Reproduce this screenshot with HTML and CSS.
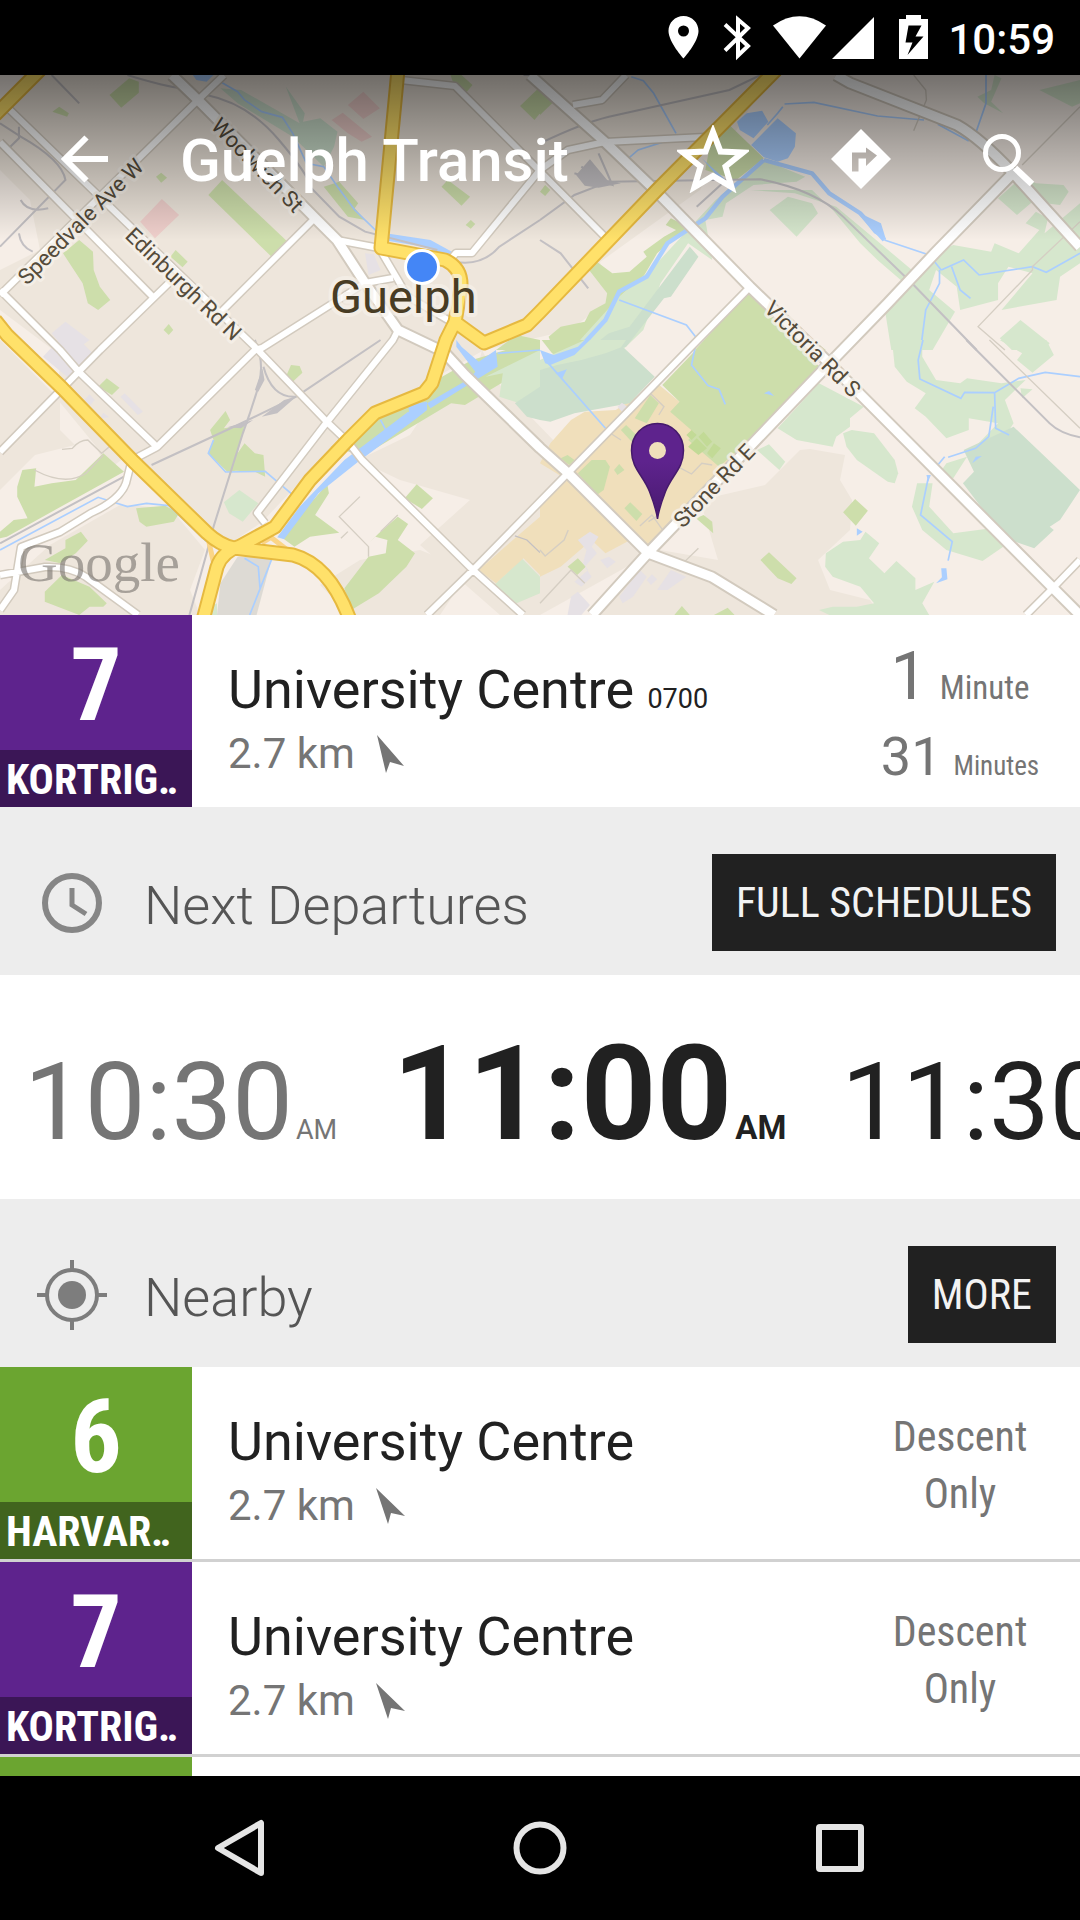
FILE: index.html
```html
<!DOCTYPE html>
<html lang="en">
<head>
<meta charset="utf-8">
<meta name="viewport" content="width=device-width, initial-scale=1">
<title>Guelph Transit</title>
<link rel="stylesheet" href="styles.css">
</head>
<body>
<div class="status">
  <svg class="status-icons" viewBox="664 0 268 75" aria-hidden="true">
    <path fill-rule="evenodd" d="M683.500 16c-8.500 0-15 6.700-15 15 0 11 15 27.500 15 27.500s15-16.500 15-27.500c0-8.300-6.500-15-15-15zm0 9.500a5.500 5.500 0 1 1 0 11 5.500 5.500 0 0 1 0-11z"/>
    <path class="bt" d="M725 24.500l23 21.500-10 9.500V19.500l10 8.500-23 22.500"/>
    <path d="M773 25.500Q799.500 7 826 25.500L799.500 58.500z"/>
    <path d="M874 17v42h-42z"/>
    <path fill-rule="evenodd" d="M906 15h15v4h7v40h-29V19h7zm2.500 10.500l-3 17h7l-5 12.500 16-18.500h-8l6-11z"/>
  </svg>
  <time class="status-time">10:59</time>
</div>

<main class="screen">
  <header class="hero">
    <svg class="map" viewBox="0 75 1080 540" role="img" aria-label="Map of Guelph">
      <defs>
        <linearGradient id="shade" x1="0" y1="0" x2="0" y2="1">
          <stop offset="0" stop-color="#000" stop-opacity=".53"/>
          <stop offset="1" stop-color="#000" stop-opacity="0"/>
        </linearGradient>
        <linearGradient id="pin" x1="0" y1="0" x2="0" y2="1">
          <stop offset=".4" stop-color="#5e238d"/>
          <stop offset="1" stop-color="#481a6f"/>
        </linearGradient>
        <path id="streets" d="M0 295L198 100 224 75M7 107L103 200 255 347 327 422 348 442 362 460 473 570 523 615M0 142L153 297M172 280L100 350 0 452M0 290L60 350 79 372 157 447 138 457 131 463 126 483Q120 500 91 513L60 532 21 547 14 590 0 610M0 575L45 567Q70 566 86 577L138 615M315 218L220 313M157 447L255 350 262 348 365 283M398 330L393 340 327 422 257 513 265 523M401 80L455 86 517 148 605 237M540 170L472 253H456L444 267M540 170L568 150 605 142 705 137M573 105L602 100 626 75M337 240L379 248 398 280M365 283L393 278M398 280L407 296 448 320M750 287L688 350 568 473 473 570 427 615M1080 560L1053 588 1026 615"/>
        <path id="avenues" d="M172 75L198 100 315 218 337 240 365 283 398 330 444 352 465 375 540 448 568 473 648 553 712 577 774 615M530 75L605 142 657 192 750 287 826 360 1053 588 1080 615M1013 173L936 252 888 303 826 367 648 553 592 615M836 75L850 83 957 125Q980 138 1013 173L1080 247"/>
        <path id="highways" d="M-5 320L7 335 62 388 134 462 207 533Q220 545 234 548L293 555Q330 565 350 620M203 620L217 567Q222 552 240 546L275 527 310 480 348 440 375 413 424 393 432 383 446 340 455 322 461 287Q462 268 445 260L381 248 398 70M455 322L484 343 527 325 540 312 657 190 776 70M-5 115L40 70"/>
      </defs>
      <rect y="75" width="1080" height="540" fill="#f6eee7"/>

      <!-- built-up areas -->
      <g class="urban">
        <path d="M30 75H770L700 190 600 262 610 300 570 330 484 350 440 375 340 440 262 522 228 545 150 470 128 455 108 470 95 445 58 400 60 355 0 310V270L40 250 30 200 0 170V110z"/>
        <path d="M0 340L60 400 60 430 75 445 35 455 0 490zM0 590L50 545 120 505 170 508 205 550 190 590 200 615H0z"/>
        <path d="M358 460L410 435 430 405 475 380 482 350 500 385 640 530 648 555 540 615 500 615 420 545 470 500 400 480z"/>
        <path d="M700 500L765 485 800 450 810 449 845 455 840 480 852 500 850 530 818 560 830 590 870 600 880 615H600L660 550 718 560z"/>
        <path d="M320 585L360 560 420 550 470 570 440 615H350z"/>
      </g>

      <!-- parks, campus and water, north-west tile -->
      <g transform="translate(0 70) scale(.3444 .3333)">
        <g class="park"><path d="M318 75L375 25 403 35V68L352 113z"/><path d="M152 125L172 110 200 130 195 140z"/><path d="M453 320L468 308 485 323 468 338z"/><path d="M605 375L645 330 835 515 790 562z"/><path d="M183 550L230 510 270 545 272 600 290 650 320 690 285 720 255 700 240 640z"/><path d="M495 560L510 540 545 575 530 592z"/><path d="M475 780L490 762 503 780 490 795z"/><path d="M1282 350L1300 330 1365 380 1340 407z"/><path d="M1352 465L1367 450 1380 462 1367 476z"/><path d="M1510 108L1568 50V130L1552 150z"/><path d="M1308 15L1340 15 1372 45 1355 66 1320 50z"/><path d="M940 350L985 335 1040 400 1030 415 1060 450 1010 440z"/><path d="M1440 840L1500 795 1568 810V840z"/></g>
        <g class="wood"><path d="M640 55L700 60 870 160 830 50 885 130 880 155 930 145 980 185 970 230 940 290 890 240 850 200 690 100z"/></g>
        <g class="pink"><path d="M1010 105L1055 65 1103 115 1055 147zM963 150L995 128 1080 200 1050 215 1010 190zM407 455L470 387 520 435 450 505z"/></g>
        <g class="civic"><path d="M1060 550L1085 553 1105 600 1070 615zM150 790L190 755 260 810 220 840H190z"/></g>
        <g class="water"><path d="M560 15H620L600 35 570 30z"/><path d="M1120 490L1250 510 1320 550 1305 565 1240 532 1125 512z"/></g>
        <path class="river" d="M645 38L690 65 710 90 760 125 820 142 850 190 890 280 940 290 980 350 1030 420 1100 490"/>
        <path class="rail" d="M370 15Q480 50 530 55M600 75Q720 100 810 210T900 350L985 440 1060 485 1270 540M0 530L190 330Q180 270 60 200L0 160M150 15L230 100M60 390Q80 430 140 415M1320 575Q1400 590 1450 530L1568 450M1568 15H1520M55 490Q60 530 95 545M55 170V205L20 240"/>
      </g>

      <!-- north-east tile -->
      <g transform="translate(540 70) scale(.3444 .3333)">
        <g class="park"><path d="M0 60L40 95 0 135z"/><path d="M500 190L550 165 650 265 570 330 480 300z"/><path d="M135 590L165 575 210 610 260 605 310 560 300 545 360 500 395 480 365 465 380 445 430 470 340 550 300 620 220 690 190 735 110 840H40L25 800 60 770 130 755 145 725 190 700 195 670z"/><path d="M610 660L830 840H450z"/><path d="M0 365L15 345 30 360 15 378z"/></g>
        <g class="leaf"><path d="M650 270L770 320 745 335 620 345 540 400 530 440 480 450 500 570 430 520 350 640 300 780 240 840H90L230 680 330 590 420 490 510 390 590 320z"/><path d="M610 360L740 370 860 410 930 470 1080 600 1130 560 1200 525 1310 545 1320 520 1390 550 1450 480 1410 460 1440 425 1475 445 1465 490 1568 400V580L1510 620 1500 690 1340 720 1430 610 1360 590 1330 640 1330 690 1220 720 1210 650 1150 600 1130 660 1205 725 1140 840H1020L1000 710 1070 650 980 570 930 520 850 420 790 360z"/><path d="M667 420L720 380 790 400 807 430 745 500z"/><path d="M1330 385L1400 320 1440 340 1520 345 1535 365 1510 405 1430 395 1385 435z"/><path d="M1450 60L1568 30V100L1545 110z"/><path d="M1335 805L1395 750 1480 820 1460 840H1370zM1270 80L1310 60 1320 15 1340 25 1310 95 1345 130 1290 100z"/></g>
        <g class="wood"><path d="M435 530L460 560 380 680 360 685 250 830 200 840 150 830 200 790 260 770z"/></g>
        <g class="water"><path d="M572 155L600 130 645 122 663 155 620 205 580 180zM613 225L690 145 743 190 740 230 720 265 690 275 650 262zM920 425L990 460 1005 510 970 490zM470 265L540 330 520 325z"/></g>
        <path class="river wide" d="M650 270L530 380 480 445 370 520 310 620 230 665 190 750 110 840M650 270L790 310 840 370 930 430 1000 510"/>
        <path class="river" d="M1000 510L1130 555 1165 600M230 690L425 765 455 805M265 20L300 32 330 70 395 190M710 102L795 97 980 138 1115 150M705 110L690 130 660 165M1295 15V100L1265 190M1155 163L1245 213M260 262L285 240 370 212M1165 600L1230 570 1275 615 1430 590 1470 607 1568 550M1160 600V640L1120 720 1105 840M1195 590L1220 660 1250 685"/>
        <path class="rail" d="M0 220Q120 160 200 140L550 60 640 15M0 450L100 375 200 335 640 328Q800 360 880 440L1080 640 1268 840M0 510L60 550 140 655M455 410L530 340M100 310L210 345 170 250M120 290L190 340"/>
        <path class="lane" d="M1085 15L1120 60 1122 90 1085 182M1568 110L1400 285M1568 455L1430 590 1430 600 1272 770 1350 840"/>
        <path class="yard" d="M105 315L145 268 195 330 235 340 170 353 130 347z"/>
      </g>

      <!-- south-west tile -->
      <g transform="translate(0 340) scale(.3444 .3333)">
        <g class="park"><path d="M285 140L310 115 347 143 325 165z"/><path d="M830 110L845 75 870 78 878 98 850 125z"/><path d="M610 270L655 213 668 240 650 265 710 255 690 340 710 310 740 340 765 345 770 410 740 395 685 392 660 395 605 340 620 300z"/><path d="M0 575L40 540 80 535 50 470 50 440 65 390 105 385 100 440 150 430 220 420 300 340 360 395 20 590 0 595z"/><path d="M395 505L480 497 520 520 505 545 425 560 405 545z"/><path d="M130 660L190 625 190 600 235 575 255 602 220 640 175 670z"/><path d="M130 755L180 705 260 740 310 790 300 800 260 800 230 825 130 785z"/><path d="M1000 745L1070 650 1120 640 1125 600 1090 590 1060 620 1100 580 1155 530 1185 552 1155 600 1205 640 1180 680 1130 730 1100 760 1020 810z"/><path d="M1175 475L1210 433 1257 475 1225 507z"/><path d="M1568 60L1350 195 1310 190 1050 350 950 430 955 460 915 525 985 578 900 590 855 620 815 590 1030 340 960 320 1100 230 1200 180 1250 130 1370 60 1568 0z"/></g>
        <g class="leaf"><path d="M650 487L695 450 750 490 705 545 665 520z"/><path d="M1568 30L1410 110 1460 100 1450 170 1568 210z"/><path d="M1435 735L1515 655 1568 710V760L1500 790z"/><path d="M610 800L630 790 630 825H605z"/></g>
        <path class="wood" d="M1495 190L1568 140V240L1530 230z"/>
        <path class="campus" d="M1568 530L1500 590 1390 690 1440 730 1520 655 1568 705z"/>
        <path class="civic" d="M125 50L170 0H230L280 50 200 115zM245 180L260 163 275 180 258 200zM350 170L362 160 415 215 400 225zM290 235L300 218 317 232z"/>
        <path class="paved" d="M690 650H790L745 825H630L640 730z"/>
        <g class="water"><path d="M1325 0L1340 20 1390 65 1440 30 1445 80 1390 115 1250 205 1240 190 1365 115 1380 95 1325 20z"/><path d="M1185 195L1240 185 1240 210 1210 235 1190 235zM1185 215L1210 235 1040 365 925 460 825 598 805 592 870 500 1000 360z"/></g>
        <path class="river" d="M0 630L285 472 370 500 425 490 490 497 600 605M620 300L605 340 655 396 770 394 850 465M1105 240L1120 270M710 655L750 680 755 745M790 655L725 825M1445 40L1568 30"/>
        <path class="rail" d="M0 610L360 410M440 375L690 255 860 170 1105 0M740 0Q770 70 750 140T705 280L620 560 600 640 550 825M765 80Q790 175 860 170"/>
        <path class="yard" d="M762 85L768 120 750 155 740 150zM860 170L805 220 760 230 825 180zM660 262L735 240 700 265z"/>
        <path class="lane" d="M180 328L210 325Q230 300 255 300L295 340 320 318M100 390Q190 440 250 400L300 345M1045 470L985 530 1070 620 1070 650M1010 575L990 595M1105 575L1155 525"/>
        <path class="rail thin" d="M1495 588L1530 600 1568 638"/>
      </g>

      <!-- south-east tile -->
      <g transform="translate(540 340) scale(.3444 .3333)">
        <path class="campus" d="M0 500L80 420 0 370 30 310 90 240 130 215 220 210 340 130 405 185 385 215 450 270 530 330 560 370 320 620 280 590 190 640 150 600 60 680 0 710z"/>
        <g class="park"><path d="M5 0H130L70 60 35 40z"/><path d="M355 135L480 0H740L820 90 620 290 520 380 430 300 450 280 378 215 405 185z"/><path d="M110 400L150 360 190 360 203 380 185 450 165 465z"/><path d="M245 505L262 487 297 522 280 543zM215 390L230 372 245 390 225 405zM60 355L80 345 100 360 85 375z"/><path d="M80 680L110 655 133 680 108 705zM235 270L250 255 285 290 270 310zM275 235L320 165 345 190 310 250z"/><path d="M453 535L475 525 500 545 503 580z"/><path d="M880 517L915 477 952 512 917 557zM640 660L665 637 745 715 730 732 690 715zM390 825L412 798 435 825zM505 825L545 803 565 825z"/></g>
        <g class="sport"><path d="M425 285L440 270 455 285 440 300zM430 320L455 295 485 325 460 345zM460 290L475 275 500 305 485 320zM485 340L505 310 525 325 500 355z"/></g>
        <g class="leaf"><path d="M0 60L130 0 250 0 230 30 60 110 0 120z"/><path d="M690 265L810 130 940 200 900 235 900 260 860 290 850 320 745 300z"/><path d="M880 280L905 270 970 280 1030 360 1040 400 1030 430 1010 425 920 360 890 320z"/><path d="M630 330L665 313 712 365 695 390z"/><path d="M1022 0L1030 80 1065 125 1120 160 1088 205 1120 230 1180 295 1245 270 1245 235 1330 250 1240 345 1280 360 1340 305 1375 250 1350 180 1410 120 1340 130 1240 115 1220 130 1150 120 1110 50V0z"/><path d="M1335 0H1470L1492 45 1430 98 1385 60 1400 40z"/><path d="M1395 145L1430 148 1400 175zM1180 370L1240 350 1200 415 1160 400z"/><path d="M1095 430L1140 430 1130 500 1200 580 1310 565 1345 620 1285 663 1180 630 1110 570 1080 500z"/><path d="M830 640L880 605 930 600 945 575 985 610 955 655 1000 700 1035 663 1090 715 1090 750 1145 725 1110 790 1130 825H840L810 810 850 800 920 800 970 790 930 740 850 710 828 680z"/></g>
        <g class="wood"><path d="M0 90L50 75 120 60 190 40 240 20 333 110 260 190 100 220 30 245 0 240z"/><path d="M1375 260L1568 450 1510 540 1480 560 1492 570 1435 625 1350 595 1228 430 1260 395 1230 330z"/></g>
        <path class="civic" d="M110 600L145 575 170 590 150 620 165 640 130 680 150 710 120 740 100 725 140 690 125 670 135 630zM230 770L290 690 310 710 270 770 240 790zM310 720L325 703 340 718 322 735zM340 750L380 690 425 710 370 750zM90 770L110 755 145 795 120 825H80zM225 200L238 188 255 202 240 218zM175 660L200 650 220 665 195 685z"/>
        <g class="water"><path d="M0 30L40 45 110 20 130 0H145L100 45 30 75 15 70zM1165 685H1180L1183 718 1150 730 1167 712zM920 565L937 575 920 587zM650 160L665 153 680 168zM1255 370L1265 350 1283 348zM1122 405L1135 405 1127 425zM45 100L78 88 65 115z"/></g>
        <path class="river" d="M20 65L190 265M455 0L440 75 488 137 520 148 538 193M1112 0L1098 60 1103 117 1222 175 1233 157 1320 158 1390 115 1467 97 1568 110M1320 158L1323 265 1362 285M1316 200L1303 290 1265 325 1185 352M1175 350L1155 375M1127 415L1105 525 1197 605 1185 662"/>
        <path class="rail" d="M1238 0L1480 250Q1510 280 1568 292"/>
        <path class="lane" d="M1305 0L1568 265M290 558L325 525 355 568M345 525L315 545M190 270L235 300M0 630L15 648 70 600 82 570M0 790L90 690 130 730M320 160L360 200 345 225M400 380L440 402 470 370 500 375M420 665L460 625"/>
      </g>

      <use href="#streets" class="case"/>
      <use href="#avenues" class="case major"/>
      <use href="#streets" class="fill"/>
      <use href="#avenues" class="fill major"/>
      <path class="ramp" d="M208 538L213 560 224 562M268 535L290 552M262 543L270 538"/>
      <use href="#highways" class="hwy-case"/>
      <use href="#highways" class="hwy"/>

      <g class="street-name">
        <text transform="translate(27 286) rotate(-45)">Speedvale Ave W</text>
        <text transform="translate(210 127) rotate(46)">Woolwich St</text>
        <text transform="translate(124 237) rotate(44)">Edinburgh Rd N</text>
        <text transform="translate(763 310) rotate(45)">Victoria Rd S</text>
        <text transform="translate(683 529) rotate(-46)">Stone Rd E</text>
      </g>
      <text class="city" x="330" y="313">Guelph</text>
      <text class="brand" x="18" y="581">Google</text>
      <rect y="75" width="1080" height="165" fill="url(#shade)"/>
      <circle cx="422" cy="267" r="18" fill="#fff"/>
      <circle cx="422" cy="267" r="15" fill="#4486f6"/>
      <path fill="url(#pin)" stroke="#461a6c" stroke-width="1.500" d="M657.500 423.500c-15 0-26 12-26 27 0 18 12 25 18 41 5 13 7 20 8 27.500 1-7.500 3-14.500 8-27.500 6-16 18-23 18-41 0-15-11-27-26-27z"/>
      <circle cx="657.500" cy="450.500" r="8.500" fill="#f0dfbb"/>
    </svg>

    <div class="appbar">
      <button class="icon-btn" aria-label="Back"><svg width="48" height="48" viewBox="0 0 48 48"><path d="M25.500 2.500L4 24l21.500 21.500M4 24h43" fill="none" stroke="#fff" stroke-width="6"/></svg></button>
      <h1 class="title">Guelph Transit</h1>
      <div class="actions">
        <button class="icon-btn" aria-label="Favourite"><svg width="72" height="68" viewBox="0 0 72 68"><path d="M36 7l7.500 19.500L66 27.500 48.500 41.500 54.500 62 36 51 17.500 62l6-20.500L6 27.500l22.500-1z" fill="none" stroke="#fff" stroke-width="6"/></svg></button>
        <button class="icon-btn" aria-label="Directions"><svg width="60" height="60" viewBox="0 0 60 60"><path fill="#fff" fill-rule="evenodd" d="M30 0l30 30-30 30L0 30zM21 42.500h6.500V29.500H35V37l11-10.500L35 18.500v5H21z"/></svg></button>
        <button class="icon-btn" aria-label="Search"><svg width="54" height="54" viewBox="0 0 54 54"><circle cx="21" cy="21" r="16.500" fill="none" stroke="#fff" stroke-width="5"/><path d="M34 36l17 16" stroke="#fff" stroke-width="6.500"/></svg></button>
      </div>
    </div>
  </header>

  <section class="stop">
    <div class="badge kortright"><span class="num">7</span><span class="route">KORTRIG‥</span></div>
    <div class="place">
      <h2 class="name">University Centre <small class="code">0700</small></h2>
      <p class="dist">2.7 km <svg width="30" height="38" viewBox="0 0 30 38"><path d="M1 0l27 31-14-4-4 11z"/></svg></p>
    </div>
    <div class="wait">
      <p class="wait-line first"><b>1</b> Minute</p>
      <p class="wait-line"><b>31</b> Minutes</p>
    </div>
  </section>

  <section>
    <div class="section-head">
      <svg class="section-icon" width="72" height="72" viewBox="0 0 72 72"><circle cx="36" cy="36" r="27" fill="none" stroke="#868686" stroke-width="6"/><path d="M36 21v17l14 9" fill="none" stroke="#868686" stroke-width="5"/></svg>
      <h2 class="section-title">Next Departures</h2>
      <button class="dark-btn">FULL SCHEDULES</button>
    </div>
    <ol class="times">
      <li class="time past">10:30<small>AM</small></li>
      <li class="time next">11:00<small>AM</small></li>
      <li class="time">11:30<small>AM</small></li>
    </ol>
  </section>

  <section>
    <div class="section-head">
      <svg class="section-icon" width="72" height="72" viewBox="0 0 72 72"><circle cx="36" cy="36" r="25" fill="none" stroke="#7d7d7d" stroke-width="4"/><circle cx="36" cy="36" r="14" fill="#7d7d7d"/><path d="M36 1v9M36 62v9M1 36h9M62 36h9" stroke="#7d7d7d" stroke-width="4"/></svg>
      <h2 class="section-title">Nearby</h2>
      <button class="dark-btn">MORE</button>
    </div>
    <div class="list">
      <a class="stop" href="#">
        <div class="badge harvard"><span class="num">6</span><span class="route">HARVAR‥</span></div>
        <div class="place">
          <h3 class="name">University Centre</h3>
          <p class="dist">2.7 km <svg width="30" height="38" viewBox="0 0 30 38"><path d="M0 1l29 28-14-3-3 11z"/></svg></p>
        </div>
        <p class="note">Descent Only</p>
      </a>
      <a class="stop" href="#">
        <div class="badge kortright"><span class="num">7</span><span class="route">KORTRIG‥</span></div>
        <div class="place">
          <h3 class="name">University Centre</h3>
          <p class="dist">2.7 km <svg width="30" height="38" viewBox="0 0 30 38"><path d="M0 1l29 28-14-3-3 11z"/></svg></p>
        </div>
        <p class="note">Descent Only</p>
      </a>
      <div class="stop"><div class="badge harvard"></div></div>
    </div>
  </section>
</main>

<nav class="navbar">
  <button class="icon-btn" aria-label="Back"><svg width="60" height="60" viewBox="0 0 60 60"><path d="M51 5v50L8 30z"/></svg></button>
  <button class="icon-btn" aria-label="Home"><svg width="60" height="60" viewBox="0 0 60 60"><circle cx="30" cy="30" r="23.500"/></svg></button>
  <button class="icon-btn" aria-label="Recent apps"><svg width="60" height="60" viewBox="0 0 60 60"><rect x="9" y="9" width="42" height="42" rx="1"/></svg></button>
</nav>
</body>
</html>
```
FILE: styles.css
```css
* { box-sizing: border-box; margin: 0; padding: 0; }

body {
  display: flex;
  flex-direction: column;
  height: 100vh;
  background: #fff;
  color: #212121;
  font-family: Roboto, "Liberation Sans", sans-serif;
  font-size: 42px;
}

button { border: 0; background: none; font: inherit; color: inherit; cursor: pointer; }
svg { display: block; flex: none; }
a { color: inherit; text-decoration: none; }

/* system status bar */
.status {
  flex: none;
  display: flex;
  align-items: center;
  justify-content: flex-end;
  gap: 16px;
  height: 75px;
  padding-right: 25px;
  background: #000;
  color: #fff;
}
.status-icons { width: 268px; height: 75px; fill: #fff; }
.status-icons .bt { fill: none; stroke: #fff; stroke-width: 4; }
.status-time { font-weight: 500; line-height: 48px; padding-top: 4px; }

.screen { flex: 1; min-height: 0; overflow: hidden; }

/* map with the app bar over it */
.hero { display: grid; }
.map { grid-area: 1 / 1; width: 100%; height: auto; }
.appbar {
  grid-area: 1 / 1;
  align-self: start;
  display: flex;
  align-items: center;
  height: 168px;
  padding: 0 45px 0 61px;
  color: #fff;
}
.icon-btn { display: grid; place-items: center; }
.title { margin-left: 71px; padding-top: 4px; font-size: 60px; font-weight: 500; line-height: 72px; white-space: nowrap; }
.actions { display: flex; align-items: center; gap: 82px; margin-left: auto; }
.actions .icon-btn:last-child { margin-left: 8px; }

.urban { fill: #eee6dc; }
.park { fill: #cddeab; }
.sport { fill: #c2da96; }
.leaf { fill: #d6e7cd; }
.wood { fill: #ccdfcc; }
.pink { fill: #efcfcb; }
.civic { fill: #e6e1e5; }
.campus { fill: #f0dfbb; }
.paved { fill: #dddad4; }
.water { fill: #abcfff; }
.river { fill: none; stroke: #abcfff; stroke-width: 5; }
.river.wide { stroke-width: 13; }
.rail { fill: none; stroke: #c3c0c3; stroke-width: 6; }
.rail.thin { stroke-width: 4; }
.yard { fill: #c3c0c3; }
.lane { fill: none; stroke: #d5cec3; stroke-width: 4; }
.case { fill: none; stroke: #d2cabe; stroke-width: 9; stroke-linejoin: round; }
.case.major { stroke-width: 13; }
.fill { fill: none; stroke: #fff; stroke-width: 6; stroke-linejoin: round; }
.fill.major { stroke-width: 9; }
.ramp { fill: none; stroke: #fbd587; stroke-width: 5; }
.hwy-case { fill: none; stroke: #e6b940; stroke-width: 15; stroke-linejoin: round; }
.hwy { fill: none; stroke: #ffe16a; stroke-width: 11; stroke-linejoin: round; }
.street-name { font-size: 22px; fill: #544b3a; stroke: #f6f1ea; stroke-opacity: .8; stroke-width: 6; paint-order: stroke; stroke-linejoin: round; }
.city { font-size: 47px; fill: #483c24; stroke: #f6f1ea; stroke-opacity: .7; stroke-width: 8; paint-order: stroke; stroke-linejoin: round; }
.brand { font-family: "Liberation Serif", serif; font-size: 55px; fill: #77726c; fill-opacity: .6; }

/* stop rows */
.stop { display: flex; align-items: stretch; height: 192px; background: #fff; }
.list .stop { height: 195px; border-bottom: 3px solid #d1d1d1; }
.badge {
  flex: none;
  display: flex;
  flex-direction: column;
  width: 192px;
  color: #fff;
  font-family: "Roboto Condensed", Roboto, sans-serif;
  font-weight: 700;
}
.kortright { background: #5e238d; }
.harvard { background: #6ba530; }
.num { height: 135px; font-size: 102px; line-height: 140px; text-align: center; }
.route { flex: none; height: 57px; padding-left: 6px; line-height: 60px; background: #3b1656; overflow: hidden; white-space: nowrap; }
.harvard .route { background: #41641e; }
.place { flex: 1; min-width: 0; padding: 42px 0 0 36px; }
.name { height: 66px; font-size: 54px; font-weight: 400; line-height: 66px; white-space: nowrap; }
.code { font-size: 27px; line-height: 27px; }
.dist { display: flex; align-items: center; gap: 21px; line-height: 62px; color: #757575; }
.dist svg { fill: #757575; }
.wait, .note { flex: none; width: 240px; text-align: center; color: #757575; font-family: "Roboto Condensed", Roboto, sans-serif; }
.wait { display: flex; flex-direction: column; gap: 20px; padding-top: 32px; }
.wait-line { display: flex; align-items: baseline; justify-content: center; gap: 12px; height: 60px; font-size: 27px; line-height: 30px; white-space: nowrap; }
.wait-line b { font-family: Roboto, sans-serif; font-size: 54px; font-weight: 400; line-height: 60px; }
.wait-line.first { font-size: 33px; }
.wait-line.first b { font-size: 66px; }
.note { padding: 41px 48px 0; line-height: 57px; }

/* section headings */
.section-head { display: flex; align-items: center; height: 168px; padding: 23px 24px 0 36px; background: #ededed; }
.section-title { margin-left: 36px; font-size: 54px; font-weight: 300; line-height: 66px; color: #555; padding-top: 6px; }
.dark-btn {
  height: 97px;
  margin-left: auto;
  padding: 0 24px;
  background: #212121;
  color: #f3f3f3;
  font-family: "Roboto Condensed", Roboto, sans-serif;
  white-space: nowrap;
}

.times { display: flex; align-items: baseline; gap: 55px; height: 224px; padding: 41px 0 0 24px; overflow: hidden; list-style: none; }
.time { flex: none; font-size: 108px; line-height: 156px; white-space: nowrap; }
.time small { margin-left: 3px; font-size: 27px; }
.time.past { color: #757575; }
.time.next { font-size: 132px; font-weight: 700; }
.time.next small { font-size: 33px; }

/* system navigation */
.navbar { flex: none; display: flex; align-items: center; justify-content: center; gap: 240px; height: 144px; background: #000; }
.navbar svg { fill: none; stroke: #e5e5e5; stroke-width: 6; stroke-linejoin: round; }
```
